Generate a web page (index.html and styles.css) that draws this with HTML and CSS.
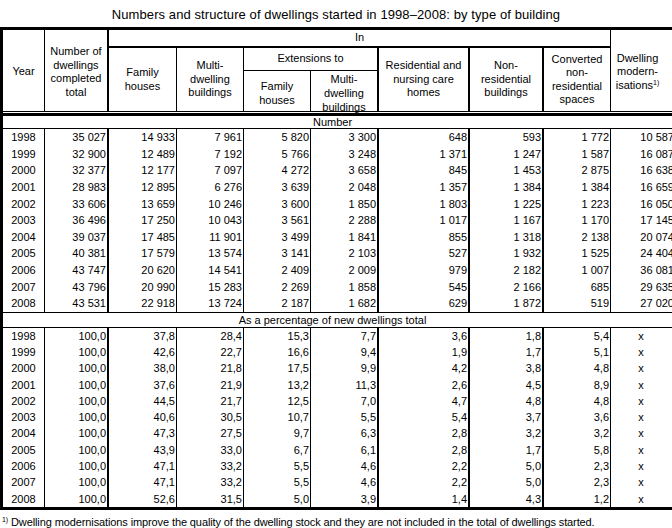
FILE: index.html
```html
<!DOCTYPE html>
<html lang="en">
<head>
<meta charset="utf-8">
<title>Numbers and structure of dwellings started</title>
<link rel="stylesheet" href="styles.css">
</head>
<body>
<div class="title">Numbers and structure of dwellings started in 1998–2008: by type of building</div>
<div class="tbl">
  <div class="head">
    <div class="h h-year">Year</div>
    <div class="h h-total">Number of<br>dwellings<br>completed<br>total</div>
    <div class="h h-in">In</div>
    <div class="h h-mod"><span>Dwelling<br>modern-<br>isations<sup>1)</sup></span></div>
    <div class="h h-fam">Family<br>houses</div>
    <div class="h h-multi">Multi-<br>dwelling<br>buildings</div>
    <div class="h h-ext">Extensions to</div>
    <div class="h h-res">Residential and<br>nursing care<br>homes</div>
    <div class="h h-nonres">Non-<br>residential<br>buildings</div>
    <div class="h h-conv">Converted<br>non-<br>residential<br>spaces</div>
    <div class="h h-efam">Family<br>houses</div>
    <div class="h h-emulti">Multi-<br>dwelling<br>buildings</div>
  </div>

  <div class="sec sec-num">Number</div>
  <div class="rows rows-num">
    <div class="row"><div>1998</div><div>35 027</div><div>14 933</div><div>7 961</div><div>5 820</div><div>3 300</div><div>648</div><div>593</div><div>1 772</div><div>10 587</div></div>
    <div class="row"><div>1999</div><div>32 900</div><div>12 489</div><div>7 192</div><div>5 766</div><div>3 248</div><div>1 371</div><div>1 247</div><div>1 587</div><div>16 087</div></div>
    <div class="row"><div>2000</div><div>32 377</div><div>12 177</div><div>7 097</div><div>4 272</div><div>3 658</div><div>845</div><div>1 453</div><div>2 875</div><div>16 638</div></div>
    <div class="row"><div>2001</div><div>28 983</div><div>12 895</div><div>6 276</div><div>3 639</div><div>2 048</div><div>1 357</div><div>1 384</div><div>1 384</div><div>16 659</div></div>
    <div class="row"><div>2002</div><div>33 606</div><div>13 659</div><div>10 246</div><div>3 600</div><div>1 850</div><div>1 803</div><div>1 225</div><div>1 223</div><div>16 050</div></div>
    <div class="row"><div>2003</div><div>36 496</div><div>17 250</div><div>10 043</div><div>3 561</div><div>2 288</div><div>1 017</div><div>1 167</div><div>1 170</div><div>17 145</div></div>
    <div class="row"><div>2004</div><div>39 037</div><div>17 485</div><div>11 901</div><div>3 499</div><div>1 841</div><div>855</div><div>1 318</div><div>2 138</div><div>20 074</div></div>
    <div class="row"><div>2005</div><div>40 381</div><div>17 579</div><div>13 574</div><div>3 141</div><div>2 103</div><div>527</div><div>1 932</div><div>1 525</div><div>24 404</div></div>
    <div class="row"><div>2006</div><div>43 747</div><div>20 620</div><div>14 541</div><div>2 409</div><div>2 009</div><div>979</div><div>2 182</div><div>1 007</div><div>36 081</div></div>
    <div class="row"><div>2007</div><div>43 796</div><div>20 990</div><div>15 283</div><div>2 269</div><div>1 858</div><div>545</div><div>2 166</div><div>685</div><div>29 635</div></div>
    <div class="row"><div>2008</div><div>43 531</div><div>22 918</div><div>13 724</div><div>2 187</div><div>1 682</div><div>629</div><div>1 872</div><div>519</div><div>27 020</div></div>
  </div>

  <div class="sec sec-pct">As a percentage of new dwellings total</div>
  <div class="rows rows-pct">
    <div class="row"><div>1998</div><div>100,0</div><div>37,8</div><div>28,4</div><div>15,3</div><div>7,7</div><div>3,6</div><div>1,8</div><div>5,4</div><div>x</div></div>
    <div class="row"><div>1999</div><div>100,0</div><div>42,6</div><div>22,7</div><div>16,6</div><div>9,4</div><div>1,9</div><div>1,7</div><div>5,1</div><div>x</div></div>
    <div class="row"><div>2000</div><div>100,0</div><div>38,0</div><div>21,8</div><div>17,5</div><div>9,9</div><div>4,2</div><div>3,8</div><div>4,8</div><div>x</div></div>
    <div class="row"><div>2001</div><div>100,0</div><div>37,6</div><div>21,9</div><div>13,2</div><div>11,3</div><div>2,6</div><div>4,5</div><div>8,9</div><div>x</div></div>
    <div class="row"><div>2002</div><div>100,0</div><div>44,5</div><div>21,7</div><div>12,5</div><div>7,0</div><div>4,7</div><div>4,8</div><div>4,8</div><div>x</div></div>
    <div class="row"><div>2003</div><div>100,0</div><div>40,6</div><div>30,5</div><div>10,7</div><div>5,5</div><div>5,4</div><div>3,7</div><div>3,6</div><div>x</div></div>
    <div class="row"><div>2004</div><div>100,0</div><div>47,3</div><div>27,5</div><div>9,7</div><div>6,3</div><div>2,8</div><div>3,2</div><div>3,2</div><div>x</div></div>
    <div class="row"><div>2005</div><div>100,0</div><div>43,9</div><div>33,0</div><div>6,7</div><div>6,1</div><div>2,8</div><div>1,7</div><div>5,8</div><div>x</div></div>
    <div class="row"><div>2006</div><div>100,0</div><div>47,1</div><div>33,2</div><div>5,5</div><div>4,6</div><div>2,2</div><div>5,0</div><div>2,3</div><div>x</div></div>
    <div class="row"><div>2007</div><div>100,0</div><div>47,1</div><div>33,2</div><div>5,5</div><div>4,6</div><div>2,2</div><div>5,0</div><div>2,3</div><div>x</div></div>
    <div class="row"><div>2008</div><div>100,0</div><div>52,6</div><div>31,5</div><div>5,0</div><div>3,9</div><div>1,4</div><div>4,3</div><div>1,2</div><div>x</div></div>
  </div>
</div>
<div class="note"><sup>1)</sup>Dwelling modernisations improve the quality of the dwelling stock and they are not included in the total of dwellings started.</div>
</body>
</html>
```

FILE: styles.css
```css
html, body {
  margin: 0;
  padding: 0;
  overflow: hidden;
  background: #fff;
}

body {
  font-family: "Liberation Sans", Arial, sans-serif;
  font-size: 11px;
  color: #000;
  width: 672px;
  height: 528px;
}

.title {
  box-sizing: border-box;
  height: 27px;
  padding-top: 2px;
  font-size: 13px;
  line-height: 25px;
  letter-spacing: 0.09px;
  text-align: center;
  white-space: nowrap;
}

.tbl {
  --cols: 42px 64px 68px 67px 67px 68px 91px 74px 67px 65px;
  box-sizing: border-box;
  width: 679px;
  border: 3px solid #000;
}

/* ---------- header ---------- */
.head {
  display: grid;
  grid-template-columns: var(--cols);
  grid-template-rows: 18px 23px 41px;
  line-height: 13.5px;
}

.h {
  box-sizing: border-box;
  display: flex;
  align-items: center;
  justify-content: center;
  text-align: center;
  white-space: nowrap;
  border-bottom: 1px solid #000;
  border-right: 1px solid #000;
}

.h sup {
  font-size: 7px;
  line-height: 0;
  vertical-align: 4px;
}

.h-year   { grid-column: 1; grid-row: 1 / span 3; padding-top: 3px; }
.h-total  { grid-column: 2; grid-row: 1 / span 3; padding-top: 3px; border-right-width: 2px; }
.h-in     { grid-column: 3 / span 7; grid-row: 1; border-bottom-width: 2px; }
.h-mod    { grid-column: 10; grid-row: 1 / span 3; padding-top: 3px; border-right: 0; }
.h-mod span { margin-right: 12px; }
.h-fam    { grid-column: 3; grid-row: 2 / span 2; }
.h-multi  { grid-column: 4; grid-row: 2 / span 2; }
.h-ext    { grid-column: 5 / span 2; grid-row: 2; border-right-width: 2px; }
.h-res    { grid-column: 7; grid-row: 2 / span 2; border-right-width: 2px; }
.h-nonres { grid-column: 8; grid-row: 2 / span 2; border-right-width: 2px; }
.h-conv   { grid-column: 9; grid-row: 2 / span 2; }
.h-efam   { grid-column: 5; grid-row: 3; align-items: flex-end; padding-bottom: 4px; }
.h-emulti { grid-column: 6; grid-row: 3; border-right-width: 2px; align-items: flex-start; padding-top: 1px; line-height: 14px; }

/* ---------- section labels ---------- */
.sec {
  box-sizing: border-box;
  height: 16px;
  border-bottom: 1px solid #000;
  text-align: center;
  padding-right: 14px;
  white-space: nowrap;
}

.sec-num {
  margin-top: 1px;
  border-top: 3px solid #000;
  line-height: 12px;
}

.sec-pct {
  border-top: 1px solid #000;
  line-height: 14px;
}

/* ---------- data rows ---------- */
.row {
  display: grid;
  grid-template-columns: var(--cols);
}

.rows-num .row {
  height: 16.636px;
  line-height: 16.636px;
}

.rows-pct .row {
  height: 16.273px;
  line-height: 16.273px;
}

.row > div {
  box-sizing: border-box;
  text-align: right;
  padding-right: 1px;
  white-space: nowrap;
  border-right: 1px solid #000;
}

.row > div:nth-child(1) {
  text-align: center;
  padding-right: 0;
}

.row > div:nth-child(2),
.row > div:nth-child(6),
.row > div:nth-child(7),
.row > div:nth-child(8) {
  border-right-width: 2px;
}

.row > div:nth-child(10) {
  border-right: 0;
  padding-right: 2px;
}

.rows-pct .row > div:nth-child(10) {
  text-align: center;
  padding-right: 5px;
}

/* ---------- footnote ---------- */
.note {
  padding: 5px 0 0 2px;
  line-height: 14px;
  letter-spacing: -0.11px;
  white-space: nowrap;
}

.note sup {
  font-size: 7px;
  line-height: 0;
  vertical-align: 4px;
  margin-right: 3px;
}
```
